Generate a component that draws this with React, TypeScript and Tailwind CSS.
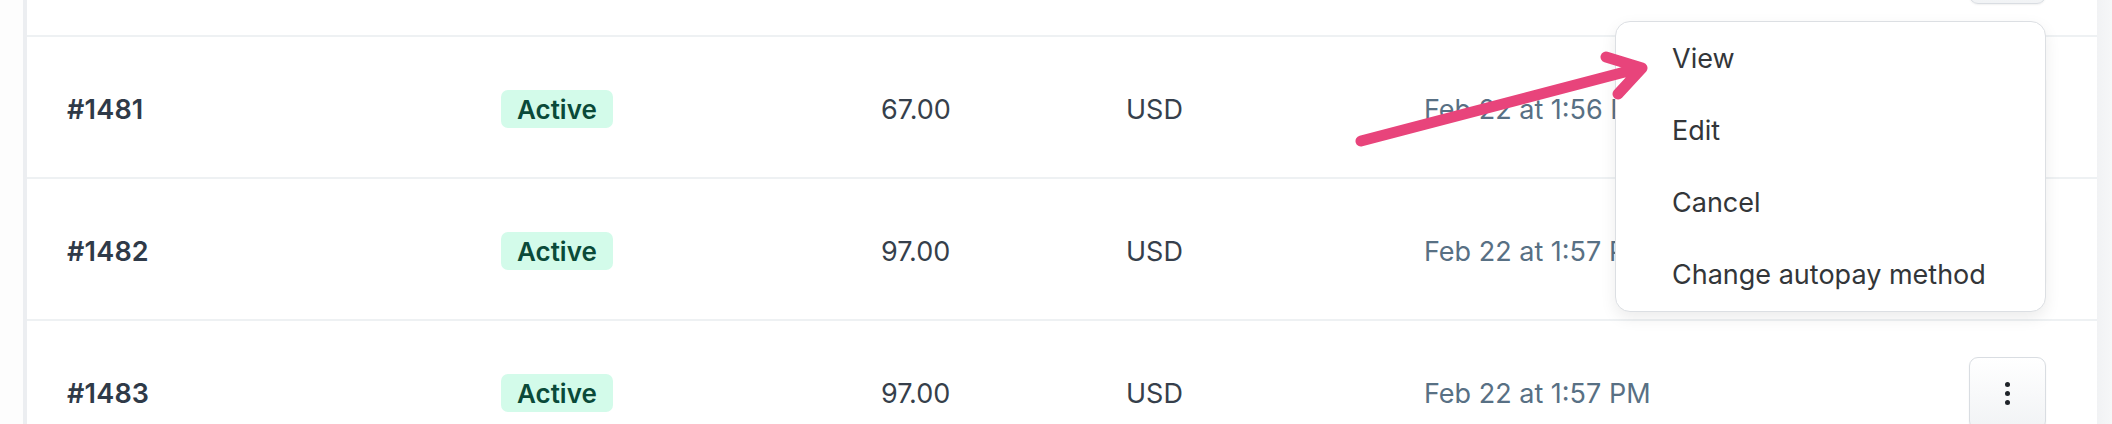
import React from "react";

type Row = { id: string; amount: string; date: string; hidden?: boolean };

const rows: Row[] = [
  { id: "#1480", amount: "97.00", date: "Feb 22 at 1:56 PM", hidden: true },
  { id: "#1481", amount: "67.00", date: "Feb 22 at 1:56 PM" },
  { id: "#1482", amount: "97.00", date: "Feb 22 at 1:57 PM" },
  { id: "#1483", amount: "97.00", date: "Feb 22 at 1:57 PM" },
];

function Kebab() {
  return (
    <button className="w-[77px] h-[73px] shrink-0 rounded-[9px] border-[1.5px] border-[#d9dde2] bg-gradient-to-b from-[#ffffff] to-[#f1f3f5] shadow-[0_1px_2px_rgba(0,0,0,0.06)] flex flex-col items-center justify-center gap-[4px]">
      <span className="block w-[5px] h-[5px] rounded-full bg-[#1f2329]" />
      <span className="block w-[5px] h-[5px] rounded-full bg-[#1f2329]" />
      <span className="block w-[5px] h-[5px] rounded-full bg-[#1f2329]" />
    </button>
  );
}

export default function App() {
  return (
    <div
      className="relative w-[2112px] h-[424px] overflow-hidden bg-white flex"
      style={{ fontFamily: "Inter, 'Noto Sans', 'Liberation Sans', sans-serif" }}
    >
      <div className="w-[23px] shrink-0 bg-[#fdfdfd]" />
      <div className="w-[4px] shrink-0 bg-[#eceef1]" />
      <div className="flex-1 flex flex-col -mt-[105px]">
        {rows.map((r) => (
          <div
            key={r.id}
            className="h-[142px] shrink-0 box-border border-b-2 border-[#eef1f3] flex items-center pt-[4px] pl-[40px] pr-[51px]"
          >
            {r.hidden ? (
              <div className="flex-1" />
            ) : (
              <>
                <div className="w-[434px] shrink-0 pt-[2px] text-[27px] font-semibold text-[#2f3a48] tracking-[0.2px]">
                  {r.id}
                </div>
                <div className="w-[380px] shrink-0 flex">
                  <span className="h-[38px] px-[16px] rounded-[7px] bg-[#d3fbea] text-[#0a4a39] text-[26px] font-semibold flex items-center">
                    Active
                  </span>
                </div>
                <div className="w-[245px] shrink-0 pt-[2px] text-[27px] text-[#363f4b]">{r.amount}</div>
                <div className="w-[298px] shrink-0 pt-[2px] text-[27px] text-[#363f4b]">USD</div>
                <div className="flex-1 pt-[2px] text-[27px] text-[#587084] whitespace-nowrap">{r.date}</div>
              </>
            )}
            <Kebab />
          </div>
        ))}
      </div>
      <div className="w-[15px] shrink-0 bg-gradient-to-r from-[#f1f2f4] to-[#f6f7f8]" />

      <div className="absolute left-[1615px] top-[21px] w-[431px] h-[291px] rounded-[15px] border-[1.5px] border-[#dcdfe3] bg-white shadow-[0_6px_16px_rgba(0,0,0,0.08)] flex flex-col">
        {["View", "Edit", "Cancel", "Change autopay method"].map((t) => (
          <div key={t} className="h-[72px] flex items-center pt-[2px] pl-[56px] text-[27px] text-[#333639]">
            {t}
          </div>
        ))}
      </div>

      <svg
        className="absolute left-0 top-0 pointer-events-none"
        width="2112"
        height="424"
        viewBox="0 0 2112 424"
      >
        <path
          d="M1361 141 L1640 68 M1606 57 L1642 68 L1618 94"
          fill="none"
          stroke="#e8447b"
          strokeWidth="11"
          strokeLinecap="round"
          strokeLinejoin="round"
        />
      </svg>
    </div>
  );
}
